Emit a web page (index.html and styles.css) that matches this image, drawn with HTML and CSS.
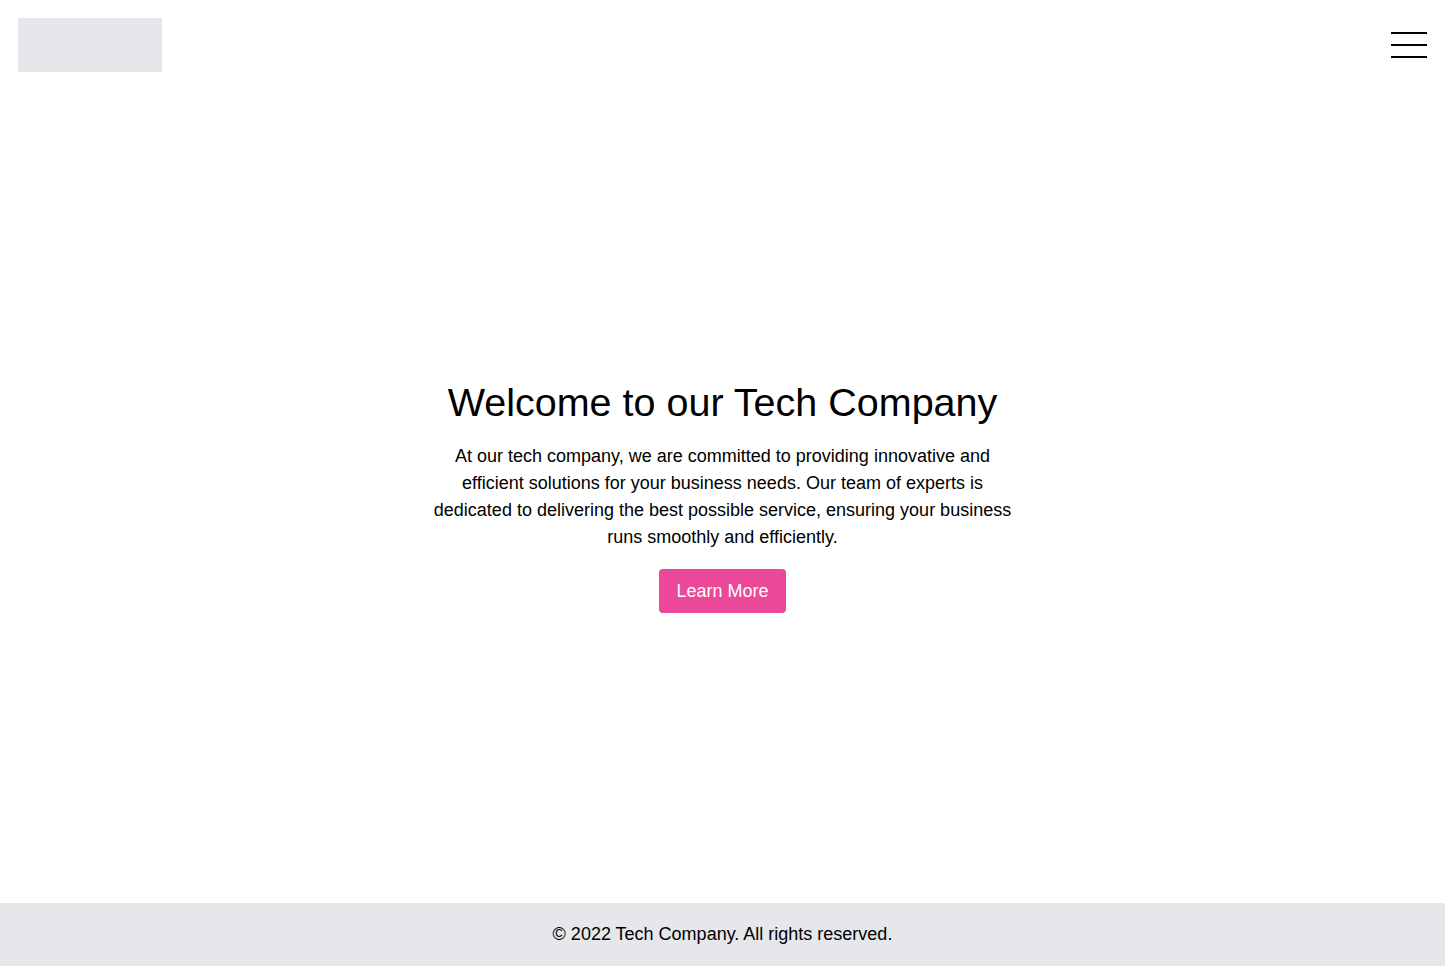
FILE: index.html
```html
<!DOCTYPE html>
<html lang="en">
<head>
<meta charset="utf-8">
<title>Tech Company</title>
<link rel="stylesheet" href="styles.css">
</head>
<body>
<div class="page">
  <header class="header">
    <div class="logo"></div>
    <button class="menu" aria-label="Menu">
      <svg width="36" height="28" viewBox="0 0 36 28"><path d="M0 2H36M0 14H36M0 26H36" stroke="#000" stroke-width="2"/></svg>
    </button>
  </header>
  <main class="hero">
    <h1 class="title">Welcome to our Tech Company</h1>
    <p class="lead">At our tech company, we are committed to providing innovative and efficient solutions for your business needs. Our team of experts is dedicated to delivering the best possible service, ensuring your business runs smoothly and efficiently.</p>
    <a class="btn" href="#">Learn More</a>
  </main>
  <footer class="footer">© 2022 Tech Company. All rights reserved.</footer>
</div>
</body>
</html>
```
FILE: styles.css
```css
* { box-sizing: border-box; }
html, body { margin: 0; padding: 0; }
body {
  font-family: "Liberation Sans", Arial, sans-serif;
  color: #000;
  background: #fff;
}
.page {
  min-height: 966px;
  display: flex;
  flex-direction: column;
}
.header {
  display: flex;
  justify-content: space-between;
  align-items: center;
  padding: 18px 18px 18px 18px;
}
.logo {
  width: 144px;
  height: 54px;
  background: #e5e7eb;
}
.menu {
  background: none;
  border: 0;
  padding: 0;
  display: flex;
}
.hero {
  flex: 1;
  display: flex;
  flex-direction: column;
  align-items: center;
  justify-content: center;
  text-align: center;
}
.title {
  font-size: 39.5px;
  font-weight: 400;
  line-height: 44px;
  margin: 0 0 19px;
}
.lead {
  max-width: 580px;
  font-size: 18px;
  line-height: 27px;
  margin: 0 0 18px;
}
.btn {
  display: inline-block;
  background: #ec4899;
  color: #fff;
  text-decoration: none;
  font-size: 18px;
  line-height: 28px;
  padding: 8px 17px;
  border-radius: 4px;
}
.footer {
  background: #e5e7eb;
  text-align: center;
  font-size: 18px;
  line-height: 27px;
  padding: 18px;
}
```
